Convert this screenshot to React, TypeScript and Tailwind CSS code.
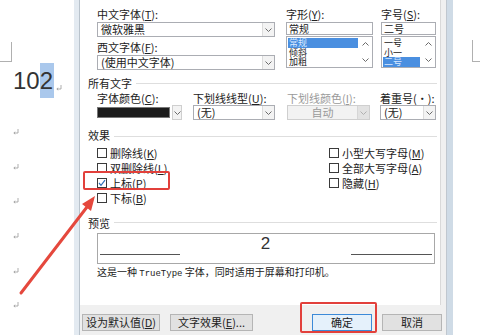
import React from "react";

function Chev({ up = false, c = "#6b6b6b" }: { up?: boolean; c?: string }) {
  return (
    <svg width="7" height="4" viewBox="0 0 7 4">
      <polyline
        points={up ? "0.5,3.5 3.5,0.5 6.5,3.5" : "0.5,0.5 3.5,3.5 6.5,0.5"}
        fill="none"
        stroke={c}
        strokeWidth="1"
      />
    </svg>
  );
}

function Ret() {
  return (
    <svg width="6" height="6" viewBox="0 0 6 6">
      <path d="M5 0 V4 H1" fill="none" stroke="#9a9a9a" strokeWidth="0.8" />
      <path d="M2.2 2.8 L0.8 4 L2.2 5.2" fill="none" stroke="#9a9a9a" strokeWidth="0.8" />
    </svg>
  );
}

function Lbl({ t, k, tail = "", gray = false }: { t: string; k?: string; tail?: string; gray?: boolean }) {
  return (
    <span className={gray ? "text-[#9a9a9a]" : "text-[#222]"}>
      {t}
      {k && (
        <>
          (<span className="underline underline-offset-1">{k}</span>)
        </>
      )}
      {tail}
    </span>
  );
}

function Combo({ text, w, disabled = false }: { text: string; w: string; disabled?: boolean }) {
  return (
    <div
      className={`flex h-[15px] border ${w} ${
        disabled ? "border-[#cfcfcf] bg-[#f2f2f2]" : "border-[#abadb3] bg-white"
      }`}
    >
      <div
        className={`flex-1 px-[3px] leading-[13px] ${
          disabled ? "text-center text-[#9a9a9a]" : "text-[#222]"
        }`}
      >
        {text}
      </div>
      <div
        className={`flex w-[12px] items-center justify-center border-l ${
          disabled ? "border-[#d6d6d6] bg-[#e2e2e2]" : "border-[#dcdcdc] bg-[#f3f3f3]"
        }`}
      >
        <Chev c={disabled ? "#b0b0b0" : "#6b6b6b"} />
      </div>
    </div>
  );
}

function Check({ label, k, checked = false }: { label: string; k: string; checked?: boolean }) {
  return (
    <div className="flex h-[15px] items-center">
      <div className="flex h-[10px] w-[10px] items-center justify-center border border-[#3a3a3a] bg-white">
        {checked && (
          <svg width="8" height="8" viewBox="0 0 8 8">
            <polyline points="1,4 3,6.3 7,1.2" fill="none" stroke="#2d6fb8" strokeWidth="1.2" />
          </svg>
        )}
      </div>
      <span className="ml-[3px] leading-[12px]">
        <Lbl t={label} k={k} />
      </span>
    </div>
  );
}

function ListBox({
  items,
  sel,
  w,
  hl,
}: {
  items: string[];
  sel: number;
  w: string;
  hl: string;
}) {
  return (
    <div className={`flex h-[32px] border border-[#abadb3] bg-white ${w}`}>
      <div className="flex-1 pl-[1px] pt-[1px] text-[9px]">
        {items.map((it, i) => (
          <div
            key={it}
            className={`h-[9.6px] pl-[1px] leading-[9.6px] ${hl} ${
              i === sel ? "bg-[#4a8fe0] text-[#d9e9ff]" : "text-[#222]"
            }`}
          >
            {it}
          </div>
        ))}
      </div>
      <div className="flex w-[14px] flex-col items-center justify-between py-[5px]">
        <Chev up />
        <Chev />
      </div>
    </div>
  );
}

function Btn({ text, w, primary = false }: { text: React.ReactNode; w: string; primary?: boolean }) {
  return (
    <div
      className={`flex h-[17px] items-center justify-center border ${w} ${
        primary ? "border-[#3c8ad8] bg-[#e5f1fb]" : "border-[#b5b5b5] bg-[#e1e1e1]"
      } text-[#222]`}
    >
      {text}
    </div>
  );
}

export default function App() {
  return (
    <div className="relative flex h-[335px] w-[480px] overflow-hidden bg-white font-['Noto_Sans_CJK_SC','Noto_Sans',sans-serif] text-[11px] text-[#222]">
      {/* Left document area */}
      <div className="flex w-[74px] flex-col">
        <div className="mt-[42px] h-[20px] w-[12px] border-b border-r border-[#b0b0b0]" />
        <div className="mt-[1px] flex h-[35px] items-center pl-[13px] font-['Liberation_Sans',sans-serif] text-[24px] text-[#333]">
          <span>10</span>
          <span className="flex h-[35px] items-center bg-[#aac8ec] pr-[1px]">2</span>
          <span className="ml-[2px] mt-[14px]">
            <Ret />
          </span>
        </div>
        <div className="mt-[17px] flex flex-col pl-[13px]">
          {[0, 1, 2, 3, 4, 5].map((i) => (
            <div key={i} className="flex h-[34.6px] items-center">
              <Ret />
            </div>
          ))}
        </div>
      </div>

      {/* Dialog */}
      <div className="flex w-[379px]">
        <div className="w-[6px] border-r border-[#b9c3cc] bg-[#e3eaf1]" />
        <div className="flex w-[366px] flex-col bg-[#f0f0f0]">
          {/* white tab page */}
          <div className="flex h-[305px] w-[361px] flex-col border-r border-[#d9d9d9] bg-white pl-[8px] pr-[3px]">
            {/* Fonts */}
            <div className="flex pl-[9px] pt-[8px]">
              <div className="flex w-[178px] flex-col">
                <div className="h-[12px] leading-[12px]">
                  <Lbl t="中文字体" k="T" tail=":" />
                </div>
                <div className="mt-[2px]">
                  <Combo text="微软雅黑" w="w-[178px]" />
                </div>
                <div className="mt-[4px] h-[12px] leading-[12px]">
                  <Lbl t="西文字体" k="F" tail=":" />
                </div>
                <div className="mt-[2px]">
                  <Combo text="(使用中文字体)" w="w-[178px]" />
                </div>
              </div>
              <div className="ml-[11px] flex w-[87px] flex-col">
                <div className="h-[12px] leading-[12px]">
                  <Lbl t="字形" k="Y" tail=":" />
                </div>
                <div className="mt-[2px] h-[13px] border border-[#abadb3] px-[2px] text-[10px] leading-[11px]">常规</div>
                <div className="mt-[1px]">
                  <ListBox items={["常规", "倾斜", "加粗"]} sel={0} w="w-[87px]" hl="w-[70px]" />
                </div>
              </div>
              <div className="ml-[8px] flex w-[55px] flex-col">
                <div className="h-[12px] leading-[12px]">
                  <Lbl t="字号" k="S" tail=":" />
                </div>
                <div className="mt-[2px] h-[13px] border border-[#abadb3] px-[2px] text-[10px] leading-[11px]">二号</div>
                <div className="mt-[1px]">
                  <ListBox items={["一号", "小一", "二号"]} sel={2} w="w-[55px]" hl="w-[37px]" />
                </div>
              </div>
            </div>

            {/* 所有文字 */}
            <div className="mt-[7px] flex h-[12px] items-center">
              <span className="leading-[12px]">所有文字</span>
              <div className="ml-[4px] h-px flex-1 bg-[#dedede]" />
            </div>
            <div className="mt-[3px] grid h-[12px] grid-cols-[96px_94px_93px_56px] pl-[9px] leading-[12px]">
              <Lbl t="字体颜色" k="C" tail=":" />
              <Lbl t="下划线线型" k="U" tail=":" />
              <Lbl t="下划线颜色" k="I" tail=":" gray />
              <span>着重号(·):</span>
            </div>
            <div className="mt-[1px] grid h-[15px] grid-cols-[96px_94px_93px_56px] pl-[9px]">
              <div className="flex">
                <div className="mt-[2px] h-[11px] w-[73px] border border-[#777] bg-[#1c1c1c]" />
                <div className="ml-[2px] flex h-[15px] w-[10px] items-center justify-center border border-[#cfcfcf] bg-[#f3f3f3]">
                  <Chev />
                </div>
              </div>
              <Combo text="(无)" w="w-[82px]" />
              <Combo text="自动" w="w-[83px]" disabled />
              <Combo text="(无)" w="w-[56px]" />
            </div>

            {/* 效果 */}
            <div className="mt-[9px] flex h-[12px] items-center">
              <span className="leading-[12px]">效果</span>
              <div className="ml-[4px] mt-[2px] h-px flex-1 bg-[#dedede]" />
            </div>
            <div className="mt-[4px] flex pl-[9px]">
              <div className="flex w-[232px] flex-col">
                <Check label="删除线" k="K" />
                <Check label="双删除线" k="L" />
                <Check label="上标" k="P" checked />
                <Check label="下标" k="B" />
              </div>
              <div className="flex flex-col">
                <Check label="小型大写字母" k="M" />
                <Check label="全部大写字母" k="A" />
                <Check label="隐藏" k="H" />
              </div>
            </div>

            {/* 预览 */}
            <div className="mt-[12px] flex h-[12px] items-center">
              <span className="leading-[12px]">预览</span>
              <div className="ml-[4px] mt-[-1px] h-px flex-1 bg-[#dedede]" />
            </div>
            <div className="ml-[9px] mt-[4px] flex h-[31px] w-[338px] items-start justify-between border border-[#a8a8a8] px-[2px]">
              <div className="mt-[20px] h-px w-[80px] bg-[#555]" />
              <span className="mt-[1px] font-['Liberation_Sans',sans-serif] text-[17px] leading-[17px] text-[#333]">2</span>
              <div className="mt-[20px] h-px w-[81px] bg-[#555]" />
            </div>
            <div className="ml-[9px] mt-[2px] h-[12px] text-[10px] leading-[12px]">
              这是一种 <span className="font-['Liberation_Mono',monospace] text-[9px]">TrueType</span> 字体，同时适用于屏幕和打印机。
            </div>
          </div>

          {/* buttons */}
          <div className="flex pl-[2px] pt-[9px]">
            <Btn w="w-[78px]" text={<Lbl t="设为默认值" k="D" />} />
            <div className="ml-[10px]">
              <Btn w="w-[83px]" text={<Lbl t="文字效果" k="E" tail="..." />} />
            </div>
            <div className="ml-[59px]">
              <Btn w="w-[60px]" text="确定" primary />
            </div>
            <div className="ml-[10px]">
              <Btn w="w-[60px]" text="取消" />
            </div>
          </div>
        </div>
        <div className="w-[7px] border-l border-[#c0c7cf] bg-[#cfdbe6]" />
      </div>

      {/* right document area */}
      <div className="flex flex-1 justify-end">
        <div className="mt-[40px] h-[22px] w-[8px] border-b border-l border-[#b0b0b0]" />
      </div>

      {/* annotations */}
      <div className="pointer-events-none absolute left-[83px] top-[171px] h-[19px] w-[87px] rounded-[2px] border-2 border-[#e2403b]" />
      <div className="pointer-events-none absolute left-[300px] top-[302px] h-[31px] w-[77px] rounded-[2px] border-2 border-[#e2403b]" />
      <svg className="pointer-events-none absolute left-0 top-0" width="480" height="335" viewBox="0 0 480 335">
        <line x1="21" y1="293" x2="87" y2="207" stroke="#e5483d" strokeWidth="3" strokeLinecap="round" />
        <polygon points="95,196 91,211 82,204" fill="#e5483d" />
      </svg>
    </div>
  );
}
